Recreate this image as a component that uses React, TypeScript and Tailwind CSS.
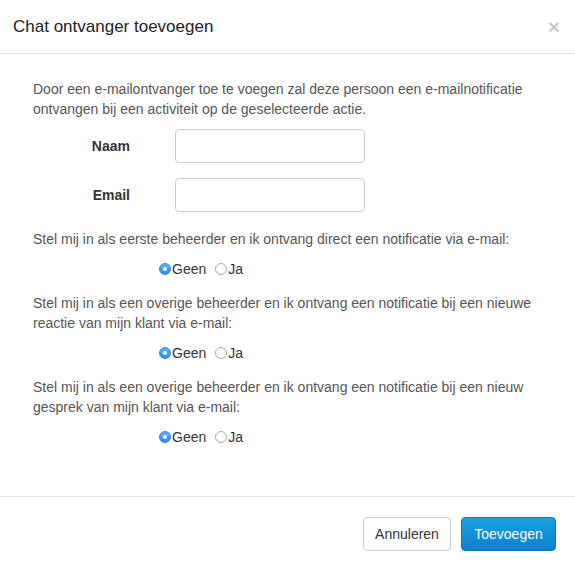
import React from "react";

function Radio({ checked }: { checked: boolean }) {
  if (checked) {
    return (
      <span className="inline-flex h-[12px] w-[12px] items-center justify-center rounded-full bg-gradient-to-b from-[#5aaeff] to-[#2a8af6] border border-[#2f86e8]">
        <span className="h-[4px] w-[4px] rounded-full bg-white" />
      </span>
    );
  }
  return <span className="inline-block h-[12px] w-[12px] rounded-full border border-[#a9a9a9] bg-white" />;
}

function RadioRow() {
  return (
    <div className="mt-[10px] flex h-[20px] items-center pl-[126px] text-[14px] text-[#333]">
      <span className="flex items-center">
        <Radio checked />
        <span className="ml-[1px]">Geen</span>
      </span>
      <span className="ml-[9px] flex items-center">
        <Radio checked={false} />
        <span className="ml-[1px]">Ja</span>
      </span>
    </div>
  );
}

export default function App() {
  return (
    <div
      className="flex h-[570px] w-[575px] flex-col bg-white"
      style={{ fontFamily: '"Liberation Sans", Arial, sans-serif' }}
    >
      <div className="flex h-[54px] items-center justify-between border-b border-[#e5e5e5] pl-[13px] pr-[15px]">
        <h4 className="text-[17px] leading-[20px] text-[#222]">Chat ontvanger toevoegen</h4>
        <span className="text-[21px] font-bold leading-none text-[#000] opacity-20">×</span>
      </div>
      <div className="flex-1 px-[33px] pt-[25px] text-[14px] leading-[20px] text-[#555]">
        <p>
          Door een e-mailontvanger toe te voegen zal deze persoon een e-mailnotificatie ontvangen bij een activiteit op de
          geselecteerde actie.
        </p>
        <div className="mt-[10px] flex flex-col gap-[15px]">
          <div className="flex items-center">
            <label className="w-[97px] text-right font-bold text-[#333]">Naam</label>
            <input className="ml-[45px] h-[34px] w-[190px] rounded-[4px] border border-[#ccc] px-3 outline-none" />
          </div>
          <div className="flex items-center">
            <label className="w-[97px] text-right font-bold text-[#333]">Email</label>
            <input className="ml-[45px] h-[34px] w-[190px] rounded-[4px] border border-[#ccc] px-3 outline-none" />
          </div>
        </div>
        <div className="mt-[17px] flex flex-col gap-[14px]">
          <div>
            <p>Stel mij in als eerste beheerder en ik ontvang direct een notificatie via e-mail:</p>
            <RadioRow />
          </div>
          <div>
            <p>
              Stel mij in als een overige beheerder en ik ontvang een notificatie bij een nieuwe reactie van mijn klant via
              e-mail:
            </p>
            <RadioRow />
          </div>
          <div>
            <p>
              Stel mij in als een overige beheerder en ik ontvang een notificatie bij een nieuw gesprek van mijn klant via
              e-mail:
            </p>
            <RadioRow />
          </div>
        </div>
      </div>
      <div className="flex justify-end gap-[10px] border-t border-[#e5e5e5] pb-[19px] pr-[19px] pt-[20px]">
        <button className="h-[34px] w-[88px] rounded-[4px] border border-[#ccc] bg-white text-[14px] text-[#333]">
          Annuleren
        </button>
        <button className="h-[34px] w-[95px] rounded-[4px] border border-[#0a78c0] bg-gradient-to-b from-[#1ba1e2] to-[#0c80cb] text-[14px] text-white">
          Toevoegen
        </button>
      </div>
    </div>
  );
}
